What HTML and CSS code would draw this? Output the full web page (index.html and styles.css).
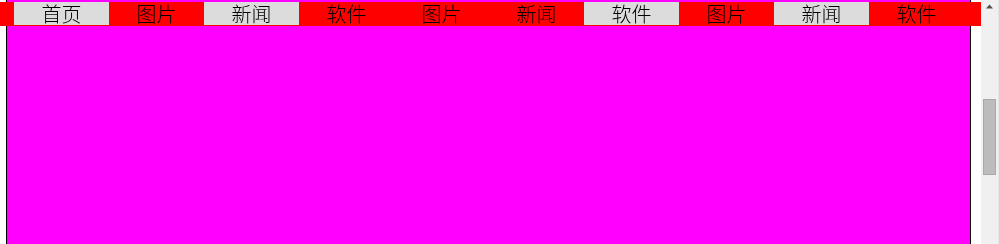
FILE: index.html
```html
<!DOCTYPE html>
<html lang="zh-CN">
<head>
<meta charset="utf-8">
<title>导航</title>
<link rel="stylesheet" href="styles.css">
</head>
<body>
<nav class="navbar">
  <ul class="menu">
    <li class="item item-gray">首页</li>
    <li class="item">图片</li>
    <li class="item item-gray">新闻</li>
    <li class="item">软件</li>
    <li class="item">图片</li>
    <li class="item">新闻</li>
    <li class="item item-gray">软件</li>
    <li class="item">图片</li>
    <li class="item item-gray">新闻</li>
    <li class="item">软件</li>
  </ul>
</nav>
<div class="content"></div>
<div class="scrollbar" aria-hidden="true">
  <svg class="scroll-arrow" width="18" height="17" viewBox="0 0 18 17">
    <polygon points="5,8.5 12,8.5 8.5,4.5" fill="#505050"/>
  </svg>
  <div class="scroll-thumb"></div>
</div>
<script src="script.js"></script>
</body>
</html>
```

FILE: styles.css
```css
html, body {
  margin: 0;
  padding: 0;
  background: #ffffff;
}

html {
  scrollbar-width: none;
}

html::-webkit-scrollbar {
  display: none;
}

body {
  font-family: "Noto Sans CJK SC", "Noto Sans", sans-serif;
  padding: 8px 28px 8px 6px;
}

.navbar {
  position: fixed;
  top: 2px;
  left: 0;
  right: 18px;
  height: 24px;
  background: #ff0000;
  z-index: 10;
}

.menu {
  display: flex;
  margin: 0;
  padding: 0 0 0 14px;
  list-style: none;
}

.item {
  width: 95px;
  height: 23px;
  display: flex;
  align-items: center;
  justify-content: center;
  font-size: 20px;
  font-weight: 300;
  line-height: 1;
  color: #000000;
}

.item-gray {
  background: #dcdcdc;
}

.content {
  height: 665px;
  background: #ff00ff;
  border: 1px solid #000000;
}

.scrollbar {
  position: fixed;
  top: 0;
  right: 0;
  bottom: 0;
  width: 17px;
  background: #f0f0f0;
  border-right: 1px solid #e6e6e6;
  z-index: 20;
}

.scroll-arrow {
  display: block;
}

.scroll-thumb {
  position: absolute;
  top: 99px;
  left: 2px;
  width: 11px;
  height: 74px;
  background: #bcbcbc;
  border: 1px solid #a9a9a9;
}
```

FILE: script.js
```js
window.scrollTo(0, 267);
window.addEventListener('load', function () {
  window.scrollTo(0, 267);
});
```
